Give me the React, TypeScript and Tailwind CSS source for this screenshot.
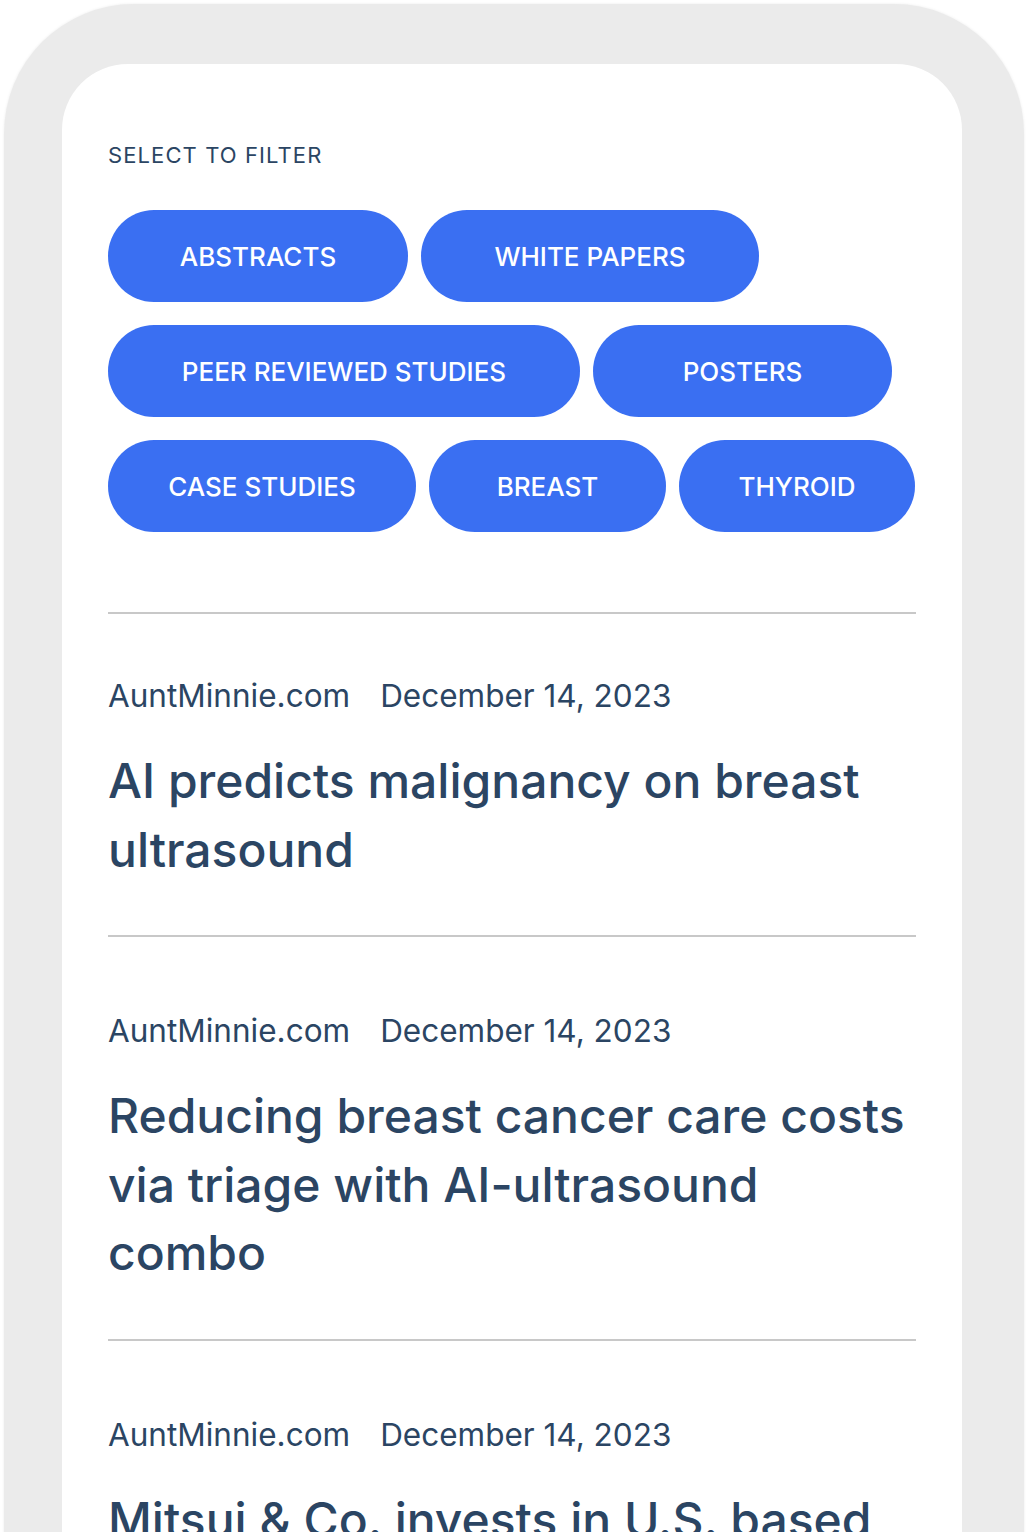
import React from "react";

const filters: { label: string; w: string }[][] = [
  [
    { label: "ABSTRACTS", w: "w-[300px]" },
    { label: "WHITE PAPERS", w: "w-[338px]" },
  ],
  [
    { label: "PEER REVIEWED STUDIES", w: "w-[472px]" },
    { label: "POSTERS", w: "w-[299px]" },
  ],
  [
    { label: "CASE STUDIES", w: "w-[308px]" },
    { label: "BREAST", w: "w-[237px]" },
    { label: "THYROID", w: "w-[236px]" },
  ],
];

const articles = [
  { source: "AuntMinnie.com", date: "December 14, 2023", title: "AI predicts malignancy on breast ultrasound" },
  {
    source: "AuntMinnie.com",
    date: "December 14, 2023",
    title: "Reducing breast cancer care costs via triage with AI-ultrasound combo",
  },
  {
    source: "AuntMinnie.com",
    date: "December 14, 2023",
    title: "Mitsui & Co. invests in U.S. based AI ultrasound company",
  },
];

export default function App() {
  return (
    <div
      className="w-[1028px] h-[1532px] overflow-hidden bg-white pt-[4px]"
      style={{ fontFamily: "Inter, 'Noto Sans', sans-serif" }}
    >
      <div className="ml-[4px] w-[1020px] h-[1600px] rounded-t-[130px] bg-[#ebebeb] pl-[58px] pt-[60px] shadow-[0_0_3px_rgba(0,0,0,0.08)]">
        <div className="w-[900px] h-[1560px] rounded-t-[66px] bg-white px-[46px] pt-[77px]">
          <div className="text-[22px] leading-[28px] tracking-[1.1px] text-[#2b4563]">SELECT TO FILTER</div>
          <div className="mt-[41px] flex flex-col gap-y-[23px]">
            {filters.map((row, i) => (
              <div key={i} className="flex gap-x-[13px]">
                {row.map((f) => (
                  <div
                    key={f.label}
                    className={`${f.w} h-[92px] rounded-full bg-[#3a6ff2] flex items-center justify-center text-white text-[26px] font-medium`}
                  >
                    {f.label}
                  </div>
                ))}
              </div>
            ))}
          </div>
          <div className="mt-[80px]">
            {articles.map((a, i) => (
              <div
                key={i}
                className={`border-t-2 border-[#c8c8c8] pb-[51px] ${i === 0 ? "pt-[62px]" : "pt-[74px]"}`}
              >
                <div className="flex gap-x-[30px] text-[31.5px] leading-[40px] text-[#2b4563]">
                  <span>{a.source}</span>
                  <span>{a.date}</span>
                </div>
                <div className="mt-[31px] text-[48px] leading-[68.5px] font-medium text-[#2b4563]">
                  {a.title}
                </div>
              </div>
            ))}
          </div>
        </div>
      </div>
    </div>
  );
}
